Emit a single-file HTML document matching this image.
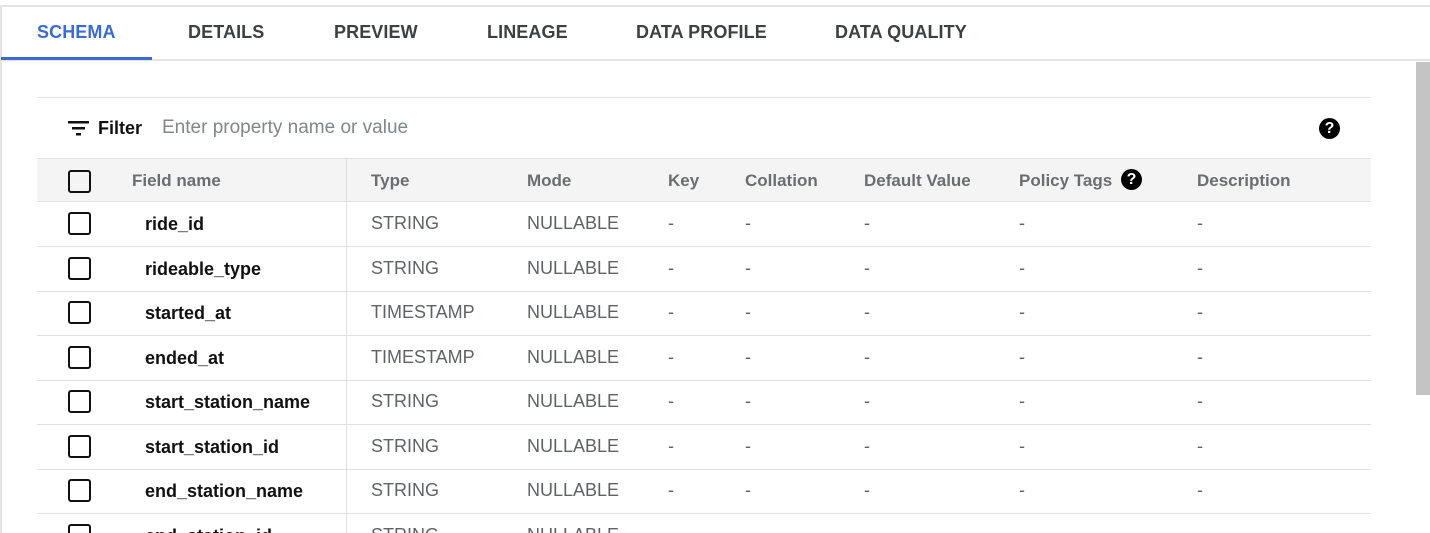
<!DOCTYPE html>
<html><head><meta charset="utf-8"><style>
*{box-sizing:border-box;margin:0;padding:0}
html,body{width:1430px;height:533px;overflow:hidden}
body{background:#fff;font-family:"Liberation Sans",Arial,sans-serif;position:relative;color:#202124}
.abs{position:absolute}
.tab{position:absolute;top:22px;font-size:18px;color:#3c4043;font-weight:bold;letter-spacing:0.1px}
.hline{position:absolute;height:1px;background:#e0e0e0}
.cb{position:absolute;left:68px;width:23px;height:23px;border:2.5px solid #111;border-radius:3px}
.t{position:absolute;font-size:18px;color:#5f6368}
.h{font-weight:bold;color:#6a6e72;font-size:17px;top:171px!important}
.f{position:absolute;left:145px;font-size:18px;color:#111;font-weight:bold}
.q{position:absolute;width:21px;height:21px;border-radius:50%;background:#000;color:#fff;font-weight:bold;font-size:16px;text-align:center;line-height:21px}
</style></head><body>
<div class="hline" style="top:5px;left:0;width:1430px;background:#e3e3e3;height:2px"></div>
<div class="abs" style="left:0;top:5px;width:2px;height:528px;background:#e3e3e3"></div>
<div class="tab" style="left:37px;color:#3b6bd0">SCHEMA</div>
<div class="tab" style="left:188px">DETAILS</div>
<div class="tab" style="left:334px">PREVIEW</div>
<div class="tab" style="left:487px">LINEAGE</div>
<div class="tab" style="left:636px">DATA PROFILE</div>
<div class="tab" style="left:835px">DATA QUALITY</div>
<div class="hline" style="top:59px;left:0;width:1430px;height:2px;background:#e3e3e3"></div>
<div class="abs" style="left:1px;top:57px;width:151px;height:3px;background:#3b6bd0"></div>
<div class="abs" style="left:1416px;top:62px;width:14px;height:333px;background:#c4c4c4"></div>
<div class="hline" style="top:97px;left:37px;width:1334px"></div>
<svg class="abs" style="left:68px;top:120px" width="22" height="16" viewBox="0 0 22 16"><rect x="0" y="1" width="21" height="2.5" fill="#111"/><rect x="4" y="7" width="13" height="2.5" fill="#111"/><rect x="8" y="13" width="5" height="2.5" fill="#111"/></svg>
<div class="abs" style="left:98px;top:118px;font-size:18px;color:#111;font-weight:bold">Filter</div>
<div class="abs" style="left:162px;top:117px;font-size:19px;color:#80868b">Enter property name or value</div>
<div class="q" style="left:1319px;top:118px">?</div>
<div class="abs" style="left:37px;top:158px;width:1334px;height:44px;background:#f4f4f4;border-top:1px solid #e0e0e0;border-bottom:1px solid #e0e0e0"></div>
<div class="abs" style="left:346px;top:158px;width:1px;height:375px;background:#e0e0e0"></div>
<div class="cb" style="top:170px"></div>
<div class="t h" style="left:132px">Field name</div>
<div class="t h" style="left:371px">Type</div>
<div class="t h" style="left:527px">Mode</div>
<div class="t h" style="left:668px">Key</div>
<div class="t h" style="left:745px">Collation</div>
<div class="t h" style="left:864px">Default Value</div>
<div class="t h" style="left:1019px">Policy Tags</div>
<div class="q" style="left:1121px;top:169px">?</div>
<div class="t h" style="left:1197px">Description</div>
<div id="rows"></div>
<script>
var d=[["ride_id","STRING"],["rideable_type","STRING"],["started_at","TIMESTAMP"],["ended_at","TIMESTAMP"],["start_station_name","STRING"],["start_station_id","STRING"],["end_station_name","STRING"],["end_station_id","STRING"]];
var h="";
for(var i=0;i<d.length;i++){var y=202+i*44.5;
h+='<div class="hline" style="top:'+(y+44)+'px;left:37px;width:1334px"></div>';
h+='<div class="cb" style="top:'+(y+10)+'px"></div>';
h+='<div class="f" style="top:'+(y+12)+'px">'+d[i][0]+'</div>';
h+='<div class="t" style="left:371px;top:'+(y+11)+'px">'+d[i][1]+'</div>';
h+='<div class="t" style="left:527px;top:'+(y+11)+'px">NULLABLE</div>';
if(i<7){[668,745,864,1019,1197].forEach(function(x){h+='<div class="t" style="left:'+x+'px;top:'+(y+11)+'px">-</div>';});}
}
document.getElementById("rows").innerHTML=h;
</script>
</body></html>
